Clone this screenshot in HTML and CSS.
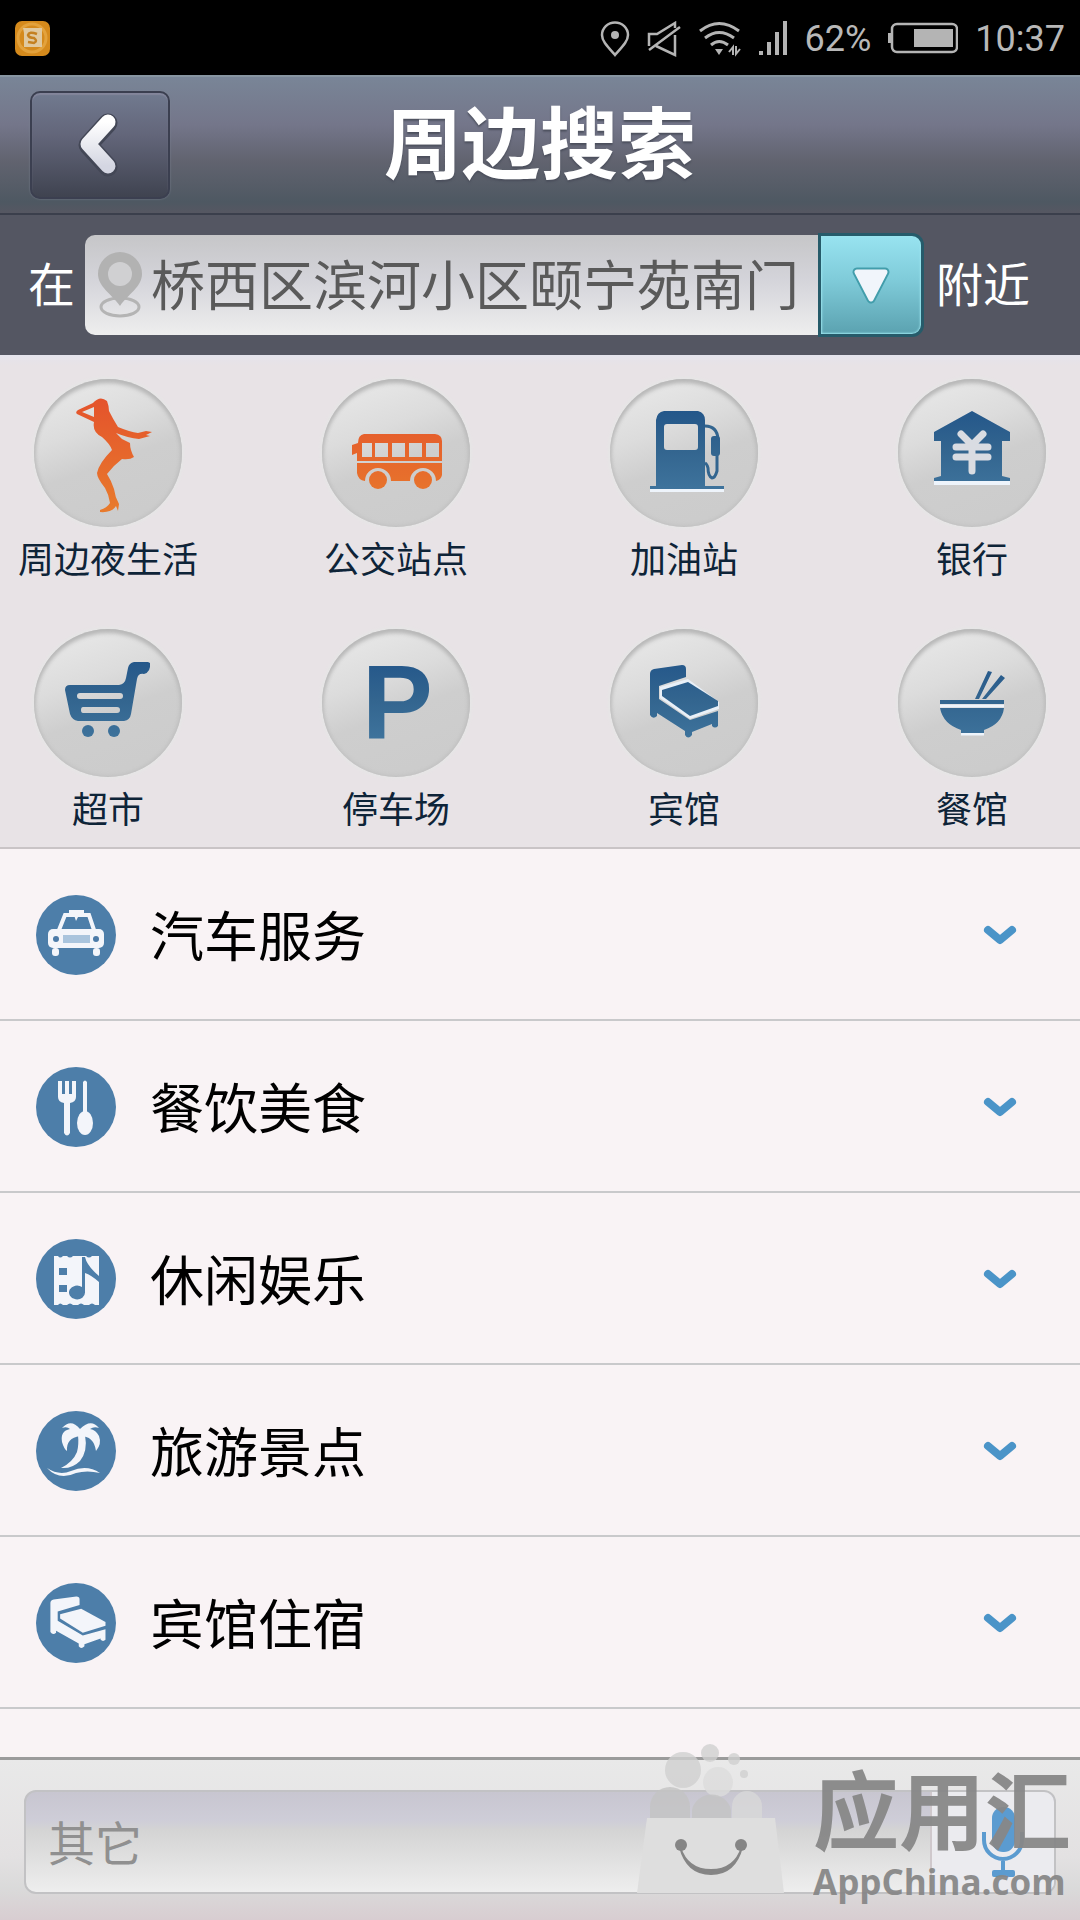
FILE: index.html
```
<!DOCTYPE html>
<html lang="zh-CN">
	<head>
		<meta charset="utf-8">
		<meta name="viewport" content="width=device-width">
		<title>周边搜索</title>
		<link rel="stylesheet" href="styles.css">
	</head>
	<body>
		<!-- 公用渐变和图形 -->
		<svg class="defs" width="0" height="0" aria-hidden="true">
			<defs>
				<linearGradient id="blue" gradientUnits="userSpaceOnUse" x1="0" y1="32" x2="0" y2="110">
					<stop offset="0" stop-color="#24578a"/>
					<stop offset="0.5" stop-color="#33658f"/>
					<stop offset="1" stop-color="#3e739c"/>
				</linearGradient>
				<linearGradient id="orange" gradientUnits="userSpaceOnUse" x1="0" y1="20" x2="0" y2="130">
					<stop offset="0" stop-color="#e4532c"/>
					<stop offset="1" stop-color="#e87a2c"/>
				</linearGradient>
				<linearGradient id="white" x1="0" y1="0" x2="0" y2="1">
					<stop offset="0" stop-color="#ffffff"/>
					<stop offset="1" stop-color="#d4d6e2"/>
				</linearGradient>
				<g id="bed">
					<path d="M40 86V45Q40 41 44 40L72 36Q76 36 76 40V48L49 57V70L80 91L108 82V97Q105 100 102 97V95L82 103V106Q78 111 75 106V102L47 84V87Q43 91 40 86Z"/>
					<path d="M52 61L78 53L108 72V77L80 87L52 67Z"/>
				</g>
			</defs>
		</svg>

		<div class="page">
			<div class="status">
				<svg class="app" width="36" height="36" viewBox="0 0 36 36">
					<rect width="35" height="35" rx="7" fill="#d58a1c"/>
					<circle cx="17" cy="17" r="14" fill="none" stroke="#e3a23c" stroke-width="3"/>
					<path d="M8 7H27V26H9V12Z" fill="#e0c9a0"/>
					<path d="M22 13Q14 10 13 14Q14 17 19 17Q23 20 19 22L13 21" fill="none" stroke="#c48020" stroke-width="2.5"/>
				</svg>
				<svg width="30" height="36" viewBox="0 0 30 36" fill="none" stroke="#b4b4b4" stroke-width="2.5">
					<path d="M15 34C7 25 2 20 2 14A13 12.500 0 0 1 28 14C28 20 23 25 15 34Z"/>
					<circle cx="15" cy="14" r="4" fill="#b4b4b4" stroke="none"/>
				</svg>
				<svg width="34" height="36" viewBox="0 0 34 36" fill="none" stroke="#b4b4b4" stroke-width="2.500">
					<path d="M2 25V13H10L28 2V7M9 25L28 34V14M2 29L33 6"/>
				</svg>
				<svg class="wifi" width="44" height="36" viewBox="0 0 44 36" fill="none" stroke="#b4b4b4" stroke-width="3">
					<path d="M2 10Q21 -5 41 10M7 17Q21 6 36 17M13 24Q21 17 30 24"/>
					<path d="M17 28H25L21 34Z" fill="#b4b4b4" stroke="none"/>
					<path d="M31 31L35 26V34M38 25V33L42 28" stroke-width="2"/>
				</svg>
				<svg width="29" height="36" viewBox="0 0 29 36" fill="#b4b4b4">
					<path d="M0 30H4V34H0ZM8 21H12V34H8ZM16 11H20V34H16ZM24 0H28V34H24Z"/>
				</svg>
				<span class="percent">62%</span>
				<svg width="70" height="36" viewBox="0 0 70 36" fill="none" stroke="#b4b4b4" stroke-width="2.500">
					<rect x="4" y="3" width="65" height="28" rx="5"/>
					<path d="M0 12H3V22H0Z" fill="#b4b4b4" stroke="none"/>
					<rect x="26" y="8" width="39" height="18" fill="#b4b4b4" stroke="none"/>
				</svg>
				<span class="time">10:37</span>
			</div>

			<header class="header">
				<button class="back" type="button" aria-label="返回">
					<svg width="48" height="70" viewBox="0 0 48 70">
						<path d="M32 13L12 35L32 57" fill="none" stroke="#434756" stroke-width="19" stroke-linecap="round" stroke-linejoin="round"/>
						<path d="M32 12L12 34L32 56" fill="none" stroke="url(#white)" stroke-width="15" stroke-linecap="round" stroke-linejoin="round"/>
					</svg>
				</button>
				<h1 class="title">周边搜索</h1>
			</header>

			<div class="where">
				<label for="place">在</label>
				<div class="field">
					<svg width="46" height="68" viewBox="0 0 46 68">
						<ellipse cx="23" cy="56" rx="19" ry="9" fill="none" stroke="#b4b4b4" stroke-width="3"/>
						<path d="M23 55C15 43 1 36 1 23A22 22 0 0 1 45 23C45 36 31 43 23 55Z" fill="#b2b2b2"/>
						<circle cx="23" cy="23" r="12" fill="#d0d0d2"/>
					</svg>
					<input type="text" id="place" value="桥西区滨河小区颐宁苑南门">
				</div>
				<button class="drop" type="button" aria-label="选择位置">
					<svg width="44" height="44" viewBox="0 0 44 44">
						<path d="M8 9H36L22 36Z" fill="#429dab" stroke="#429dab" stroke-width="9" stroke-linejoin="round"/>
						<path d="M8 9H36L22 36Z" fill="#f1f5fb" stroke="#f1f5fb" stroke-width="5" stroke-linejoin="round"/>
					</svg>
				</button>
				<span class="near">附近</span>
			</div>

			<nav class="grid">
				<a class="item" href="#">
					<svg class="ball" viewBox="0 0 148 148" fill="url(#orange)">
						<path fill-rule="evenodd" d="M59 24Q66 16 73 22Q75 27 75 32Q79 40 84 48Q96 53 104 54L112 52L118 53L112 56L116 57L105 60Q94 59 82 54L88 60L96 64Q96 71 100 78Q96 81 88 80Q80 86 73 95Q77 101 80 110Q81 118 85 125L84 132L82 127Q78 134 66 133V131Q73 129 76 124Q75 116 71 109Q63 99 63 94Q65 84 78 71Q76 65 68 58Q58 53 60 43L43 35Q41 33 44 31ZM48 33L60 38V28Z"/>
					</svg>
					<span>周边夜生活</span>
				</a>
				<a class="item" href="#">
					<svg class="ball" viewBox="0 0 148 148" fill="url(#orange)">
						<path fill-rule="evenodd" d="M42 55H113Q120 56 120 62V82H35V74L30 76V66L36 64Q36 56 42 55ZM40 64V78H50V64ZM53 64V78H66V64ZM70 64V78H83V64ZM87 64V78H100V64ZM104 64V78H117V64Z"/>
						<path d="M35 84H120V96Q119 101 114 102A13 13 0 0 0 88 102H69A13 13 0 0 0 43 102Q36 101 35 94Z"/>
						<circle cx="56" cy="101" r="9"/>
						<circle cx="101" cy="101" r="9"/>
					</svg>
					<span>公交站点</span>
				</a>
				<a class="item" href="#">
					<svg class="ball" viewBox="0 0 148 148" fill="url(#blue)">
						<path d="M40 111H114" stroke="#eef4fb" stroke-width="4"/>
						<path fill-rule="evenodd" d="M46 107V41Q47 33 54 32H88Q95 34 95 41V107H114V110H40V107ZM57 45Q54 45 54 48V68Q54 71 57 71H85Q88 71 88 68V48Q88 45 85 45Z"/>
						<path d="M95 47Q107 47 108 60M107 74V92Q105 99 102 99Q98 97 98 89Q97 85 95 84" fill="none" stroke="#33658f" stroke-width="3"/>
						<rect x="101" y="57" width="9" height="20" rx="3"/>
					</svg>
					<span>加油站</span>
				</a>
				<a class="item" href="#">
					<svg class="ball" viewBox="0 0 148 148" fill="url(#blue)">
						<path d="M36 104H112" stroke="#eef4fb" stroke-width="4"/>
						<path d="M74 32L112 53V62H104V97L112 99V102H36V99L43 97V62H36V53Z"/>
						<path d="M63 55L74 66L85 55M74 66V92M58 68H90M58 78H90" fill="none" stroke="#d9dce2" stroke-width="7" stroke-linecap="round"/>
					</svg>
					<span>银行</span>
				</a>
				<a class="item" href="#">
					<svg class="ball" viewBox="0 0 148 148" fill="url(#blue)">
						<path fill-rule="evenodd" d="M116 34Q117 43 110 45Q104 44 103 50L97 85Q96 91 90 92H44Q38 91 36 85L31 61Q31 56 36 56H85Q91 55 92 49L94 39Q95 34 100 33H114ZM46 64Q43 64 43 67T46 70H86Q89 70 89 67T86 64ZM49 78Q47 78 47 81T49 84H83Q86 84 86 81T83 78Z"/>
						<circle cx="54" cy="102" r="6"/>
						<circle cx="80" cy="102" r="6"/>
					</svg>
					<span>超市</span>
				</a>
				<a class="item" href="#">
					<svg class="ball" viewBox="0 0 148 148" fill="url(#blue)">
						<text class="park" x="40" y="110">P</text>
					</svg>
					<span>停车场</span>
				</a>
				<a class="item" href="#">
					<svg class="ball" viewBox="0 0 148 148" fill="url(#blue)">
						<path d="M50 58L78 50L109 73V80L80 90L50 69Z" fill="#e9f0f8"/>
						<use href="#bed"/>
					</svg>
					<span>宾馆</span>
				</a>
				<a class="item" href="#">
					<svg class="ball" viewBox="0 0 148 148" fill="url(#blue)">
						<path d="M42 77H106M63 105H86" stroke="#eef4fb" stroke-width="3"/>
						<path d="M42 71H106V75H42ZM42 79H106Q104 95 86 101V104H63V101Q45 95 42 79Z"/>
						<path d="M90 42L94 43L81 70H77ZM103 46L107 49L88 70H84Z"/>
					</svg>
					<span>餐馆</span>
				</a>
			</nav>

			<ul class="list">
				<li>
					<button class="row" type="button">
						<svg class="dot" viewBox="0 0 80 80" fill="#f3f5fa">
							<path d="M23 35L29 20H53L58 35" fill="none" stroke="#f3f5fa" stroke-width="4"/>
							<path d="M33 15H48V20H33ZM38 20H43L40 26Z"/>
							<rect x="12" y="34" width="56" height="19" rx="5"/>
							<rect x="16" y="53" width="7" height="8" rx="3"/>
							<rect x="57" y="53" width="7" height="8" rx="3"/>
							<rect x="27" y="40" width="27" height="8" fill="#a9c4dd"/>
							<circle cx="20" cy="44" r="3" fill="#4b7ba8"/>
							<circle cx="60" cy="44" r="3" fill="#4b7ba8"/>
						</svg>
						<span class="name">汽车服务</span>
						<svg class="arrow" viewBox="0 0 34 22"><path d="M5 6L17 16L29 6"/></svg>
					</button>
				</li>
				<li>
					<button class="row" type="button">
						<svg class="dot" viewBox="0 0 80 80" fill="#f3f5fa">
							<path d="M22 14H26V27H29V14H33V27H36V14H40V30Q40 35 34 36V66Q31 71 28 66V36Q22 35 22 30Z"/>
							<path d="M47 15Q49 12 51 15V45H47Z"/>
							<ellipse cx="49" cy="56" rx="8" ry="12"/>
						</svg>
						<span class="name">餐饮美食</span>
						<svg class="arrow" viewBox="0 0 34 22"><path d="M5 6L17 16L29 6"/></svg>
					</button>
				</li>
				<li>
					<button class="row" type="button">
						<svg class="dot" viewBox="0 0 80 80" fill="#f3f5fa">
							<path fill-rule="evenodd" d="M18 17H22Q24 20 27 17H31Q34 20 37 17H50Q53 20 56 17H63V66H59Q56 63 53 66H48Q45 63 42 66H37Q34 63 31 66H27Q24 63 22 66H18ZM23 29V36H31V29ZM23 46V53H31V46Z"/>
							<path d="M46 18H49Q51 27 63 37V43Q55 36 49 34V53A8 7 0 1 1 46 48Z" fill="#4d7ea9"/>
						</svg>
						<span class="name">休闲娱乐</span>
						<svg class="arrow" viewBox="0 0 34 22"><path d="M5 6L17 16L29 6"/></svg>
					</button>
				</li>
				<li>
					<button class="row" type="button">
						<svg class="dot" viewBox="0 0 80 80" fill="#f3f5fa">
							<path d="M44 18Q35 7 26 17Q31 15 34 18Q24 20 26 31Q28 38 31 40Q30 27 44 25Q58 25 60 40Q66 33 63 25Q60 19 54 18Q58 15 63 17Q55 7 44 18Z"/>
							<path d="M42 24H49Q52 40 44 50Q36 58 25 57Q37 51 41 41Q43 34 42 24Z"/>
							<path d="M11 57Q23 65 35 60Q51 53 64 62Q51 59 40 62Q23 70 11 57Z"/>
						</svg>
						<span class="name">旅游景点</span>
						<svg class="arrow" viewBox="0 0 34 22"><path d="M5 6L17 16L29 6"/></svg>
					</button>
				</li>
				<li>
					<button class="row" type="button">
						<svg class="dot" viewBox="0 0 80 80" fill="#f3f5fa">
							<use href="#bed" transform="translate(-18 -12) scale(0.81 0.71)"/>
						</svg>
						<span class="name">宾馆住宿</span>
						<svg class="arrow" viewBox="0 0 34 22"><path d="M5 6L17 16L29 6"/></svg>
					</button>
				</li>
			</ul>

			<footer class="footer">
				<div class="other">
					<input type="text" placeholder="其它" aria-label="其它">
					<button class="mic" type="button" aria-label="语音输入">
						<svg width="44" height="78" viewBox="0 0 44 78">
							<rect x="11" y="4" width="23" height="45" rx="11" fill="#5b9bd0"/>
							<path d="M3 29V37A19 19 0 0 0 41 37V29M22 56V68" fill="none" stroke="#5b9bd0" stroke-width="4"/>
							<rect x="11" y="67" width="23" height="7" rx="2" fill="#5b9bd0"/>
						</svg>
					</button>
				</div>
				<div class="mark">
					<svg width="150" height="150" viewBox="0 0 150 150">
						<g fill="#cfcfcf" fill-opacity="0.8">
							<circle cx="46" cy="26" r="18"/>
							<circle cx="73" cy="9" r="9"/>
							<circle cx="97" cy="15" r="6"/>
							<circle cx="107" cy="30" r="4"/>
							<circle cx="81" cy="38" r="15" fill="#dcdcdc"/>
							<path d="M13 74V63A20 20 0 0 1 53 63V74Z" fill="#c3c3c3"/>
							<path d="M55 74V66A20 20 0 0 1 94 66V74Z" fill="#c3c3c3"/>
							<path d="M95 74V62A15 15 0 0 1 125 62V74Z" fill="#d8d8d8"/>
						</g>
						<path d="M10 74H138L147 149H0Z" fill="#dedede"/>
						<circle cx="44" cy="101" r="6" fill="#858585"/>
						<circle cx="104" cy="101" r="6" fill="#858585"/>
						<path d="M43 103Q50 126 74 126Q98 126 105 103Q98 130 74 130Q50 130 43 103Z" fill="#858585" stroke="#858585" stroke-width="2"/>
					</svg>
					<div class="brand">
						<strong>应用汇</strong>
						<span>AppChina.com</span>
					</div>
				</div>
			</footer>
		</div>
	</body>
</html>
```
FILE: styles.css
```
*{
	margin: 0;
	padding: 0;
	box-sizing: border-box;
}
body{
	font-family: "Noto Sans CJK SC", sans-serif;
	color: #000;
	background-color: #f9f3f5;
}
.defs{
	position: absolute;
}
button,input{
	font-family: inherit;
	border: 0;
	background: none;
}
a{
	text-decoration: none;
}
.page{
	display: flex;
	flex-direction: column;
	min-height: 100vh;
}

/*状态栏*/
.status{
	height: 75px;
	padding: 3px 15px 0;
	display: flex;
	align-items: center;
	gap: 17px;
	background-color: #000;
	color: #b8b8b8;
	font-family: Roboto, sans-serif;
	font-size: 36px;
}
.app{
	margin-right: auto;
}

/*标题栏*/
.header{
	height: 140px;
	padding: 0 30px;
	display: grid;
	grid-template-columns: 1fr auto 1fr;
	align-items: center;
	border-top: 2px solid #8795a1;
	border-bottom: 2px solid #3b3f4c;
	background: linear-gradient(#798597, #74768a 35%, #61636f 62%, #4e5862 92%, #565762);
}
.back{
	width: 140px;
	height: 108px;
	display: flex;
	align-items: center;
	justify-content: center;
	border: 2px solid #3b3f50;
	border-radius: 10px;
	background: linear-gradient(#717a8f, #63667a 40%, #3f4350);
	box-shadow: inset 0 2px 1px #83859b, 0 0 2px #7f8494;
}
.title{
	padding-bottom: 12px;
	font-size: 78px;
	line-height: 100px;
	font-weight: 700;
	color: #fff;
	text-shadow: 0 2px 2px #4b4f5c;
}

/*位置*/
.where{
	height: 140px;
	padding: 0 50px 0 28px;
	display: flex;
	align-items: center;
	background-color: #545662;
	color: #fff;
	font-size: 47px;
	line-height: 60px;
}
.where label,.near{
	padding-bottom: 6px;
}
.field{
	flex: 1;
	min-width: 0;
	height: 100px;
	margin-left: 10px;
	padding-left: 12px;
	display: flex;
	align-items: center;
	border-radius: 10px 0 0 10px;
	background: linear-gradient(#c6c6c8, #d4d4da 45%, #eeeeee);
}
.field svg{
	flex: none;
}
.field input{
	flex: 1;
	min-width: 0;
	margin-left: 8px;
	height: 86px;
	padding-bottom: 6px;
	font-size: 54px;
	color: #5a5a5a;
}
.drop{
	width: 106px;
	height: 104px;
	margin-right: 12px;
	display: flex;
	align-items: center;
	justify-content: center;
	border: 3px solid #265b6a;
	border-radius: 0 12px 12px 0;
	background: linear-gradient(#98e3f0, #7fcbd9 45%, #5ba2b0);
	box-shadow: inset 0 0 2px 1px #9be4ee;
}

/*常用分类*/
.grid{
	padding: 24px 0 18px;
	display: grid;
	grid-template-columns: repeat(4, 216px);
	justify-content: space-between;
	row-gap: 50px;
	background: linear-gradient(#e4e3ec, #e8e3e6 10px);
	border-bottom: 2px solid #c9c4c6;
}
.item{
	display: flex;
	flex-direction: column;
	align-items: center;
	gap: 8px;
	font-size: 36px;
	line-height: 44px;
	color: #0e2438;
}
.ball{
	width: 148px;
	height: 148px;
	border-radius: 50%;
	background: linear-gradient(160deg, #ebebeb, #dcdcdc 35%, #cecece 55%, #cbcbcb);
	box-shadow: inset 0 4px 4px #b8b8b8, inset 0 0 4px 1px #c0c0c0, 0 0 3px 2px #e6e6e6;
}
.park{
	font-family: "Liberation Sans", sans-serif;
	font-size: 106px;
	font-weight: 700;
}

/*分类列表*/
.list{
	flex: 1;
	list-style: none;
}
.row{
	width: 100%;
	height: 172px;
	padding: 2px 63px 0 36px;
	display: flex;
	align-items: center;
	border-bottom: 2px solid #c9c9cb;
	cursor: pointer;
}
.dot{
	width: 80px;
	height: 80px;
	border-radius: 50%;
	background-color: #4d7ea9;
}
.name{
	margin: 0 auto 0 34px;
	padding-bottom: 2px;
	font-size: 54px;
	line-height: 80px;
}
.arrow{
	width: 34px;
	height: 22px;
	fill: none;
	stroke: #4b94c8;
	stroke-width: 8;
	stroke-linecap: round;
	stroke-linejoin: round;
}

/*底部搜索*/
.footer{
	position: relative;
	padding: 30px 24px 26px;
	border-top: 3px solid #9b9b9b;
	background: linear-gradient(#e9e9e9, #e3e1e2 60%, #dadada 80%, #d8cdd1);
}
.other{
	display: flex;
	height: 104px;
	border: 2px solid #c2c2c4;
	border-radius: 12px;
	overflow: hidden;
	background: linear-gradient(#c8c6d0, #cecdd8 28%, #d4d4d4 38%, #eeeeee);
}
.other input{
	flex: 1;
	min-width: 0;
	padding: 0 0 4px 22px;
	font-size: 47px;
}
.other input::placeholder{
	color: #909090;
}
.mic{
	width: 124px;
	display: flex;
	align-items: center;
	justify-content: center;
	padding-left: 20px;
	border-left: 2px solid #cfc8cc;
	background-color: #ebebef;
}

/*右下角标志*/
.mark{
	position: absolute;
	right: 9px;
	bottom: 16px;
	display: flex;
	align-items: flex-end;
	gap: 26px;
	color: #888;
	pointer-events: none;
}
.mark svg{
	margin-bottom: 10px;
}
.brand{
	display: flex;
	flex-direction: column;
	gap: 10px;
	opacity: 0.95;
}
.brand strong{
	font-size: 86px;
	line-height: 86px;
	font-weight: 700;
}
.brand span{
	font-family: "Open Sans", sans-serif;
	font-size: 35px;
	line-height: 44px;
	font-weight: 700;
}
```
